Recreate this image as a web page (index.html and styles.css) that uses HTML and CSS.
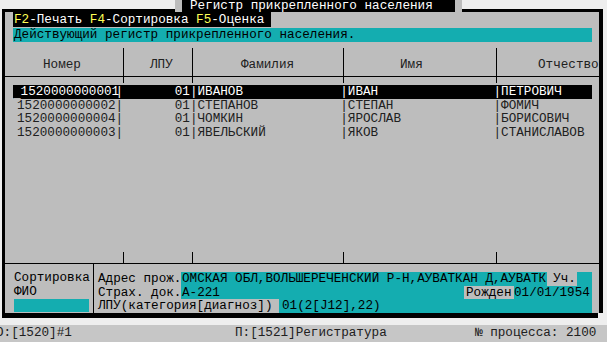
FILE: index.html
```html
<!DOCTYPE html>
<html lang="ru">
<head>
    <meta charset="UTF-8">
    <title>Регистр прикрепленного населения</title>
    <link rel="stylesheet" href="styles.css">
</head>
<body>

<div class="top">
    <div class="top-side top-left"></div>
    <div class="top-pad"></div>
    <div class="title">Регистр прикрепленного населения</div>
    <div class="top-pad"></div>
    <div class="top-side top-right"></div>
</div>

<div class="frame">
    <div class="win">
        <div class="menu"><span class="key">F2</span>-Печать <span class="key">F4</span>-Сортировка <span class="key">F5</span>-Оценка</div>
        <div class="hint">Действующий регистр прикрепленного населения.</div>

        <!-- table header -->
        <div class="cols head">
            <div class="h1">Номер</div>
            <div class="h2">ЛПУ</div>
            <div class="h3">Фамилия</div>
            <div class="h4">Имя</div>
            <div class="h5">Отчество</div>
        </div>
        <div class="rule"></div>
        <div class="cols stub"><div></div><div></div><div></div><div></div><div></div></div>

        <div class="rows">
            <div class="row sel">
                <span class="num"><span class="cur">_</span>1520000000001</span>
                <span class="lpu"><span>|</span>01</span>
                <span class="fam">|ИВАНОВ</span>
                <span class="name">|ИВАН</span>
                <span class="pat">|ПЕТРОВИЧ</span>
            </div>
            <div class="row">
                <span class="num">1520000000002</span>
                <span class="lpu"><span>|</span>01</span>
                <span class="fam">|СТЕПАНОВ</span>
                <span class="name">|СТЕПАН</span>
                <span class="pat">|ФОМИЧ</span>
            </div>
            <div class="row">
                <span class="num">1520000000004</span>
                <span class="lpu"><span>|</span>01</span>
                <span class="fam">|ЧОМКИН</span>
                <span class="name">|ЯРОСЛАВ</span>
                <span class="pat">|БОРИСОВИЧ</span>
            </div>
            <div class="row">
                <span class="num">1520000000003</span>
                <span class="lpu"><span>|</span>01</span>
                <span class="fam">|ЯВЕЛЬСКИЙ</span>
                <span class="name">|ЯКОВ</span>
                <span class="pat">|СТАНИСЛАВОВ</span>
            </div>
        </div>

        <div class="cols stub tall"><div></div><div></div><div></div><div></div><div></div></div>
        <div class="rule"></div>

        <!-- details of the selected person -->
        <div class="panel">
            <div class="panel-left">
                <div class="line">Сортировка</div>
                <div class="line">ФИО</div>
                <div class="sort-box"></div>
            </div>
            <div class="panel-right">
                <div class="prow">
                    <span class="lbl">Адрес прож.</span>
                    <span class="fld">
                        <span class="val">ОМСКАЯ ОБЛ,ВОЛЬШЕРЕЧЕНСКИЙ Р-Н,АУВАТКАН Д,АУВАТК</span>
                        <span class="tag tag-uch">Уч.</span>
                    </span>
                </div>
                <div class="prow">
                    <span class="lbl">Страх. док.</span>
                    <span class="fld">
                        <span class="val grow">А-221</span>
                        <span class="tag tag-born">Рожден</span>
                        <span class="val date">01/01/1954</span>
                    </span>
                </div>
                <div class="prow">
                    <span class="lbl wide">ЛПУ(категория[диагноз])</span>
                    <span class="fld diag">01(2[J12],22)</span>
                </div>
            </div>
        </div>
    </div>
</div>
<div class="shadow"></div>

<div class="status">
    <span class="st1">О:[1520]#1</span>
    <span class="st2">П:[1521]Регистратура</span>
    <span class="st3">№ процесса: 2100</span>
</div>

</body>
</html>
```

FILE: styles.css
```css
body {
    margin: 0;
    width: 607px;
    height: 342px;
    overflow: hidden;
    background-color: #eeeeee;
    font-family: "Liberation Mono", "DejaVu Sans Mono", monospace;
    font-size: 12.65px;
    color: #000;
}
/* top line with the window title */
.top {
    display: flex;
    height: 12px;
}
.top-side {
    box-sizing: border-box;
    border-bottom: 3px solid #000;
}
.top-left {
    margin-left: 2px;
    width: 173px;
}
.top-right {
    width: 141px;
}
.top-pad {
    width: 7px;
    background-color: #bdbdbd;
}
.title {
    width: 273px;
    background-color: #000;
    color: #fff;
    line-height: 12px;
    padding-left: 8px;
    box-sizing: border-box;
    white-space: nowrap;
}
/* window body */
.frame {
    display: flex;
    margin-left: 2px;
    width: 601px;
    height: 301px;
    border-left: 3px solid #000;
    border-right: 4px solid #000;
    box-sizing: border-box;
}
.win {
    flex: 1;
    display: flex;
    flex-direction: column;
    background-color: #bdbdbd;
    overflow: hidden;
}
.menu {
    margin-left: 8px;
    width: 258px;
    height: 15px;
    line-height: 15px;
    padding-left: 1px;
    box-sizing: border-box;
    background-color: #000;
    color: #fff;
    white-space: nowrap;
}
.key {
    color: #ffff55;
}
.hint {
    margin: 1px 7px 0 8px;
    height: 14px;
    line-height: 14px;
    padding-left: 1px;
    background-color: #14adb0;
    white-space: nowrap;
}
/* table */
.cols {
    display: grid;
    grid-template-columns: 119px 69px 151px 153px 1fr;
}
.cols > div {
    border-right: 1px solid #000;
    white-space: nowrap;
    overflow: hidden;
}
.cols > div:last-child {
    border-right: none;
}
.head {
    margin-top: 6px;
    height: 28px;
}
.head > div {
    padding-top: 10px;
    line-height: 14px;
    color: #202020;
}
.h1 { padding-left: 38px; }
.h2 { padding-left: 26px; }
.h3 { padding-left: 48px; }
.h4 { padding-left: 56px; }
.h5 { padding-left: 41px; }
.rule {
    height: 1px;
    background-color: #000;
}
.stub {
    height: 6px;
}
.stub.tall {
    height: 11px;
}
.rows {
    flex: 1;
    margin: 2px 7px 0 8px;
}
.row {
    display: flex;
    height: 13.6px;
    line-height: 13.6px;
    white-space: nowrap;
    color: #202020;
}
.row.sel {
    background-color: #000;
    color: #fff;
}
.num {
    width: 102.6px;
    display: flex;
    justify-content: space-between;
}
.num::before {
    content: "";
}
.cur {
    position: relative;
    top: 2px;
}
.lpu {
    width: 74.3px;
    display: flex;
    justify-content: space-between;
}
.fam {
    width: 150.4px;
}
.name {
    width: 153.2px;
}
.pat {
    flex: 1;
    overflow: hidden;
}
/* bottom panel */
.panel {
    display: flex;
    height: 49px;
}
.panel-left {
    width: 89px;
    box-sizing: border-box;
    border-right: 1px solid #000;
    padding: 7px 0 0 9px;
}
.line {
    height: 14px;
    line-height: 14px;
    white-space: nowrap;
}
.sort-box {
    width: 75px;
    height: 13px;
    background-color: #14adb0;
}
.panel-right {
    flex: 1;
    padding: 8px 7px 0 4px;
}
.prow {
    display: flex;
    height: 13.7px;
    line-height: 13.7px;
    white-space: nowrap;
}
.lbl {
    width: 83px;
    flex: none;
}
.lbl.wide {
    width: 181px;
}
.fld {
    flex: 1;
    display: flex;
    background-color: #14adb0;
    padding-left: 1px;
    overflow: hidden;
}
.fld.diag {
    padding-left: 3px;
}
.grow {
    flex: 1;
}
.tag {
    background-color: #bdbdbd;
    box-sizing: border-box;
}
.tag-uch {
    width: 30px;
    margin-left: 1px;
    padding-left: 6px;
}
.tag-born {
    width: 50px;
    padding-left: 2px;
}
.date {
    width: 78px;
}
.shadow {
    margin-left: 2px;
    width: 596px;
    height: 5px;
    background-color: #000;
}
/* status line */
.status {
    display: flex;
    margin-top: 7px;
    height: 17px;
    line-height: 16px;
    background-color: #c6c6c6;
    color: #202020;
    white-space: nowrap;
}
.st1 {
    margin-left: -4px;
    width: 239px;
}
.st2 {
    width: 240px;
}
```
